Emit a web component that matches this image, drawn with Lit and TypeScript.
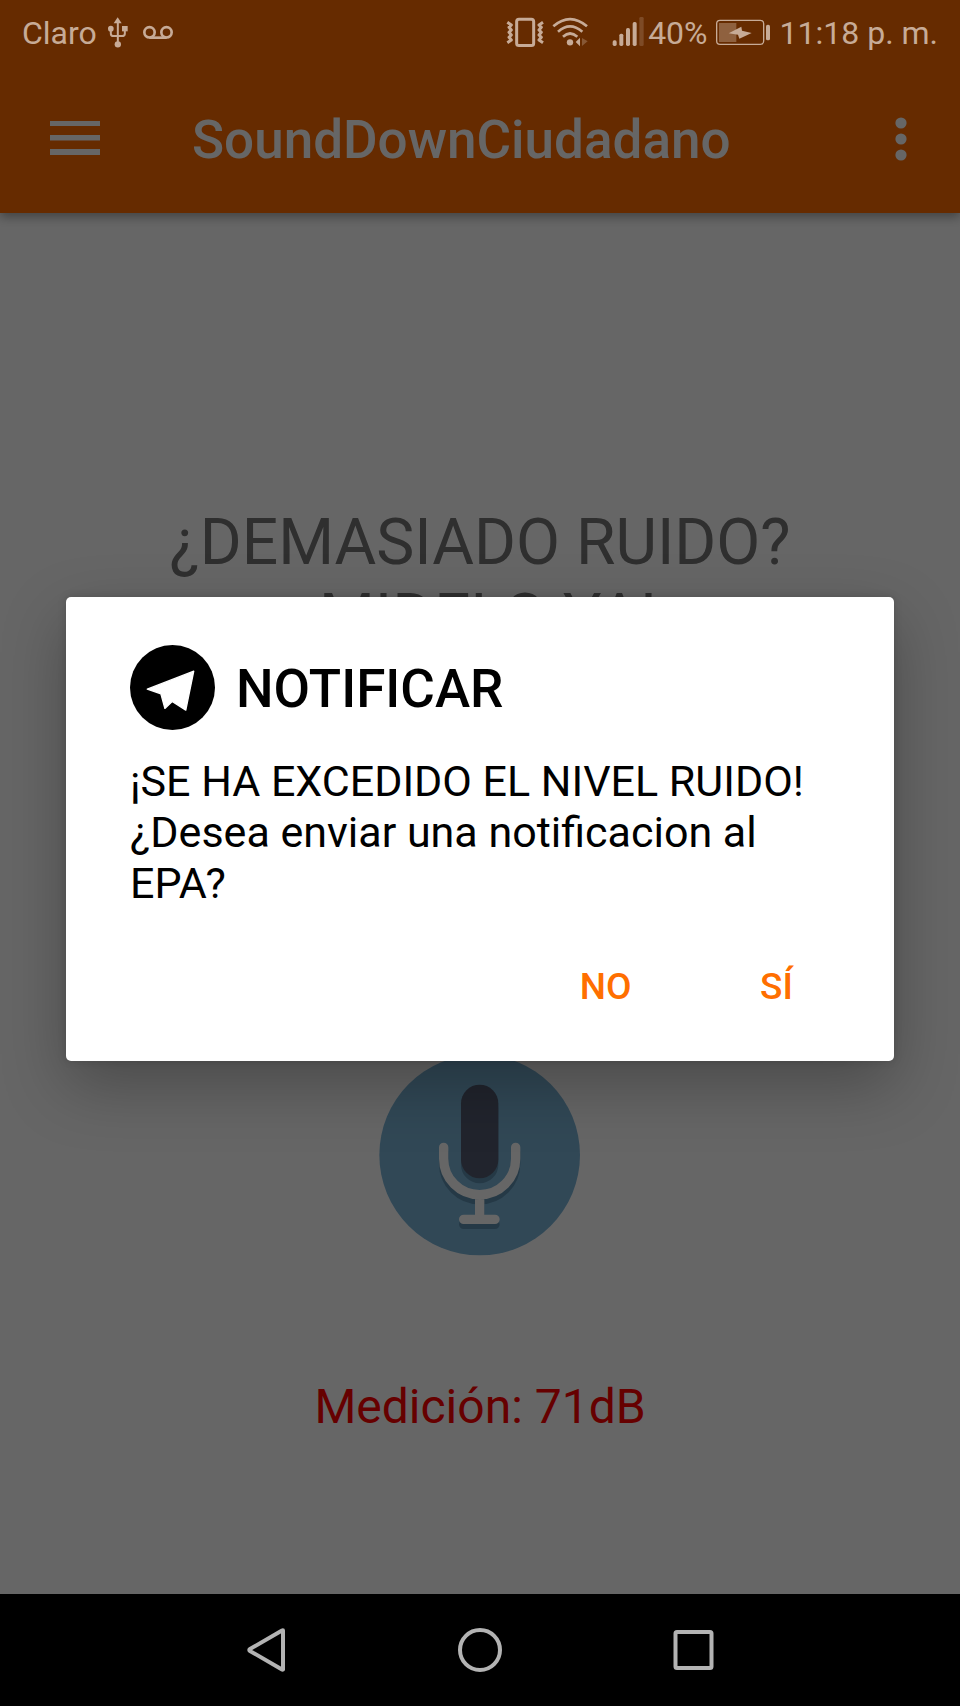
import { LitElement, html, css } from "lit";
import { customElement, property } from "lit/decorators.js";

@customElement("status-bar")
export class StatusBar extends LitElement {
  static styles = css`
    :host {
      position: relative;
      z-index: 1;
      display: flex;
      justify-content: space-between;
      align-items: center;
      height: 64px;
      padding: 0 22px;
      box-sizing: border-box;
      background: #662b00;
      color: #c7ab97;
      font-size: 32px;
      line-height: 38px;
      white-space: nowrap;
    }
    .group {
      display: flex;
      align-items: center;
    }
    span {
      padding-top: 2px;
    }
    svg {
      display: block;
      height: 32px;
      flex: none;
      fill: currentColor;
    }
    .line {
      fill: none;
      stroke: currentColor;
    }
    .usb { width: 22px; margin-left: 10px; }
    .voicemail { width: 32px; margin-left: 13px; }
    .vibrate { width: 38px; }
    .wifi { width: 36px; margin-left: 8px; }
    .signal { width: 32px; margin: 0 4px 0 24px; }
    .battery { width: 56px; margin: 0 9px 0 7px; }
  `;

  render() {
    return html`
      <div class="group">
        <span>Claro</span>
        <svg class="usb" viewBox="318 48 66 96" aria-label="USB">
          <path d="M350 52l12 18h-24z" />
          <circle cx="350.500" cy="133" r="9.500" />
          <circle cx="329.500" cy="86" r="8.500" />
          <rect x="363" y="78" width="17" height="16" />
          <path class="line" stroke-width="6" d="M350.500 65v66M329.500 88v13q0 7 8 7h25q9 0 9-7V90" />
        </svg>
        <svg class="voicemail" viewBox="423 48 96 96" aria-label="Buzón de voz">
          <g class="line" stroke-width="8">
            <circle cx="445.500" cy="97" r="15.500" />
            <circle cx="496.500" cy="97" r="15.500" />
            <path d="M445 113h52" />
          </g>
        </svg>
      </div>
      <div class="group">
        <svg class="vibrate" viewBox="48 48 114 96" aria-label="Vibración">
          <rect class="line" stroke-width="9" x="80" y="57.500" width="51" height="79" rx="7" />
          <path class="line" stroke-width="9" stroke-linejoin="round" d="M52 67l12 8-7 7 7 8-7 7 7 8-7 7 7 8-12 8M159 67l-12 8 7 7-7 8 7 7-7 8 7 7-7 8 12 8" />
        </svg>
        <svg class="wifi" viewBox="186 48 108 96" aria-label="Wi-Fi">
          <g class="line" stroke-width="8">
            <path d="M190 79q50-43 101 0" />
            <path d="M204 95q36-32 73 0" />
            <path d="M219 110q21-19 43 0" />
          </g>
          <circle cx="240" cy="127" r="9.500" />
          <path d="M270 113v26l-13-13z" />
          <path opacity=".35" d="M276 114v24l17-14z" />
        </svg>
        <svg class="signal" viewBox="366 48 96 96" aria-label="Señal">
          <rect x="368" y="121" width="12" height="17" rx="5" />
          <rect x="388" y="101" width="12" height="37" rx="5" />
          <rect x="408" y="84" width="12" height="54" rx="5" />
          <rect x="428" y="66" width="12" height="72" rx="5" />
          <rect opacity=".25" x="448" y="51" width="13" height="87" rx="4" />
        </svg>
        <span>40%</span>
        <svg class="battery" viewBox="675 48 168 96" aria-label="Cargando">
          <rect class="line" stroke-width="4" x="680" y="61" width="141" height="72" rx="10" />
          <rect opacity=".42" x="687" y="69" width="52" height="57" />
          <rect x="828" y="74" width="12" height="47" rx="5" />
          <path d="M716 100l38-20 2 12 29 7-37 17-4-12z" />
        </svg>
        <span>11:18 p. m.</span>
      </div>
    `;
  }
}

@customElement("app-toolbar")
export class AppToolbar extends LitElement {
  @property() heading = "";

  static styles = css`
    :host {
      display: flex;
      align-items: center;
      height: 149px;
      padding: 0 43px;
      box-sizing: border-box;
      background: #ff6b00;
      color: #fff;
      box-shadow: 0 4px 10px rgba(0, 0, 0, 0.35);
    }
    button {
      display: flex;
      align-items: center;
      justify-content: center;
      width: 64px;
      height: 64px;
      padding: 0;
      border: 0;
      background: none;
      color: inherit;
    }
    .more {
      width: 32px;
    }
    svg {
      display: block;
      fill: currentColor;
    }
    h1 {
      flex: 1;
      margin: 0 0 0 85px;
      padding-top: 3px;
      font-size: 53px;
      line-height: 64px;
      font-weight: 500;
    }
  `;

  render() {
    return html`
      <button aria-label="Abrir menú">
        <svg width="50" height="36" viewBox="0 0 50 36">
          <path d="M0 0h50v5H0zM0 14h50v5.500H0zM0 28h50v6H0z" />
        </svg>
      </button>
      <h1>${this.heading}</h1>
      <button class="more" aria-label="Más opciones">
        <svg width="12" height="44" viewBox="0 0 12 44">
          <circle cx="6" cy="6" r="5.600" />
          <circle cx="6" cy="22" r="5.600" />
          <circle cx="6" cy="38" r="5.600" />
        </svg>
      </button>
    `;
  }
}

@customElement("notify-dialog")
export class NotifyDialog extends LitElement {
  static styles = css`
    :host {
      display: block;
      background: #fff;
      color: #000;
      border-radius: 5px;
      box-shadow: 0 24px 64px rgba(0, 0, 0, 0.28), 0 0 8px rgba(0, 0, 0, 0.15);
    }
    header {
      display: flex;
      align-items: center;
      gap: 21px;
      padding: 48px 64px 0;
    }
    svg {
      display: block;
      flex: none;
    }
    h2 {
      margin: 0;
      padding-top: 3px;
      font-size: 53px;
      line-height: 64px;
      font-weight: 500;
    }
    p {
      margin: 0;
      padding: 26px 64px 13px;
      font-size: 43px;
      line-height: 51px;
    }
    .actions {
      display: flex;
      justify-content: flex-end;
      padding: 0 32px 11px;
    }
    button {
      min-width: 171px;
      height: 128px;
      padding: 0 21px;
      border: 0;
      background: none;
      color: #ff6f00;
      font-family: inherit;
      font-size: 37px;
      font-weight: 500;
    }
  `;

  render() {
    return html`
      <header>
        <svg width="85" height="85" viewBox="32 44 256 256" aria-hidden="true">
          <circle cx="160" cy="172" r="128" />
          <path fill="#fff" stroke="#fff" stroke-width="4" stroke-linejoin="round" d="M84 177l140-54-24 117-41-26-22 21-12-44z" />
        </svg>
        <h2>NOTIFICAR</h2>
      </header>
      <p>¡SE HA EXCEDIDO EL NIVEL RUIDO! ¿Desea enviar una notificacion al EPA?</p>
      <div class="actions">
        <button>NO</button>
        <button>SÍ</button>
      </div>
    `;
  }
}

@customElement("nav-bar")
export class NavBar extends LitElement {
  static styles = css`
    :host {
      display: flex;
      justify-content: center;
      height: 112px;
      background: #000;
    }
    button {
      display: flex;
      align-items: center;
      justify-content: center;
      flex: 0 1 213px;
      padding: 0;
      border: 0;
      background: none;
    }
    svg {
      fill: none;
      stroke: #b3b3b3;
      stroke-width: 4;
      stroke-linejoin: round;
    }
  `;

  render() {
    return html`
      <button aria-label="Atrás">
        <svg width="48" height="48" viewBox="0 0 48 48"><path d="M40 4.500v39a1 1 0 0 1-1 0L7 25q-1.500-1 0-2L39 4.500q1-.500 1 0z" /></svg>
      </button>
      <button aria-label="Inicio">
        <svg width="48" height="48" viewBox="0 0 48 48"><circle cx="24" cy="24" r="20" /></svg>
      </button>
      <button aria-label="Recientes">
        <svg width="48" height="48" viewBox="0 0 48 48"><rect x="6.500" y="6" width="36" height="36" rx="1.500" /></svg>
      </button>
    `;
  }
}

@customElement("app-root")
export class AppRoot extends LitElement {
  @property({ type: Number }) level = 71;

  static styles = css`
    :host {
      display: flex;
      flex-direction: column;
      min-height: 100vh;
      font-family: Roboto, "Noto Sans", sans-serif;
      background: #fff;
    }
    .screen {
      position: relative;
      flex: 1;
      display: flex;
      flex-direction: column;
    }
    main {
      display: flex;
      flex-direction: column;
      align-items: center;
      padding: 292px 64px 64px;
      text-align: center;
    }
    h2 {
      max-width: 720px;
      margin: 0;
      color: #757575;
      font-size: 64px;
      line-height: 75px;
      font-weight: 400;
    }
    .mic {
      margin: 399px 0 0;
      padding: 0;
      border: 0;
      background: none;
    }
    .mic svg {
      display: block;
    }
    .reading {
      margin: 123px 0 0;
      color: #f00;
      font-size: 48px;
      line-height: 56px;
    }
    .scrim {
      position: absolute;
      inset: 0;
      display: flex;
      flex-direction: column;
      justify-content: center;
      padding: 0 66px;
      background: rgba(0, 0, 0, 0.6);
    }
  `;

  render() {
    return html`
      <status-bar></status-bar>
      <div class="screen">
        <app-toolbar heading="SoundDownCiudadano"></app-toolbar>
        <main>
          <h2>¿DEMASIADO RUIDO?<br />¡MIDELO YA!</h2>
          <button class="mic" aria-label="Medir">
            <svg width="202" height="202" viewBox="57 43 606 606">
              <circle cx="359" cy="346" r="301" fill="#7ab4d8" />
              <g transform="translate(0 15)" opacity=".3" stroke="#1e3c50" stroke-width="28" fill="none" stroke-linecap="round">
                <path d="M251 323v34a108 108 0 0 0 216 0v-34M359 465v70M311 539h94" />
                <rect x="317" y="149" width="84" height="253" rx="42" fill="#1e3c50" />
              </g>
              <path d="M251 323v34a108 108 0 0 0 216 0v-34M359 465v70M311 539h94" fill="none" stroke="#fff" stroke-width="28" stroke-linecap="round" />
              <rect x="303" y="135" width="112" height="281" rx="56" fill="#545b70" />
            </svg>
          </button>
          <p class="reading">Medición: ${this.level}dB</p>
        </main>
        <div class="scrim">
          <notify-dialog role="alertdialog" aria-modal="true" aria-label="NOTIFICAR"></notify-dialog>
        </div>
      </div>
      <nav-bar></nav-bar>
    `;
  }
}
